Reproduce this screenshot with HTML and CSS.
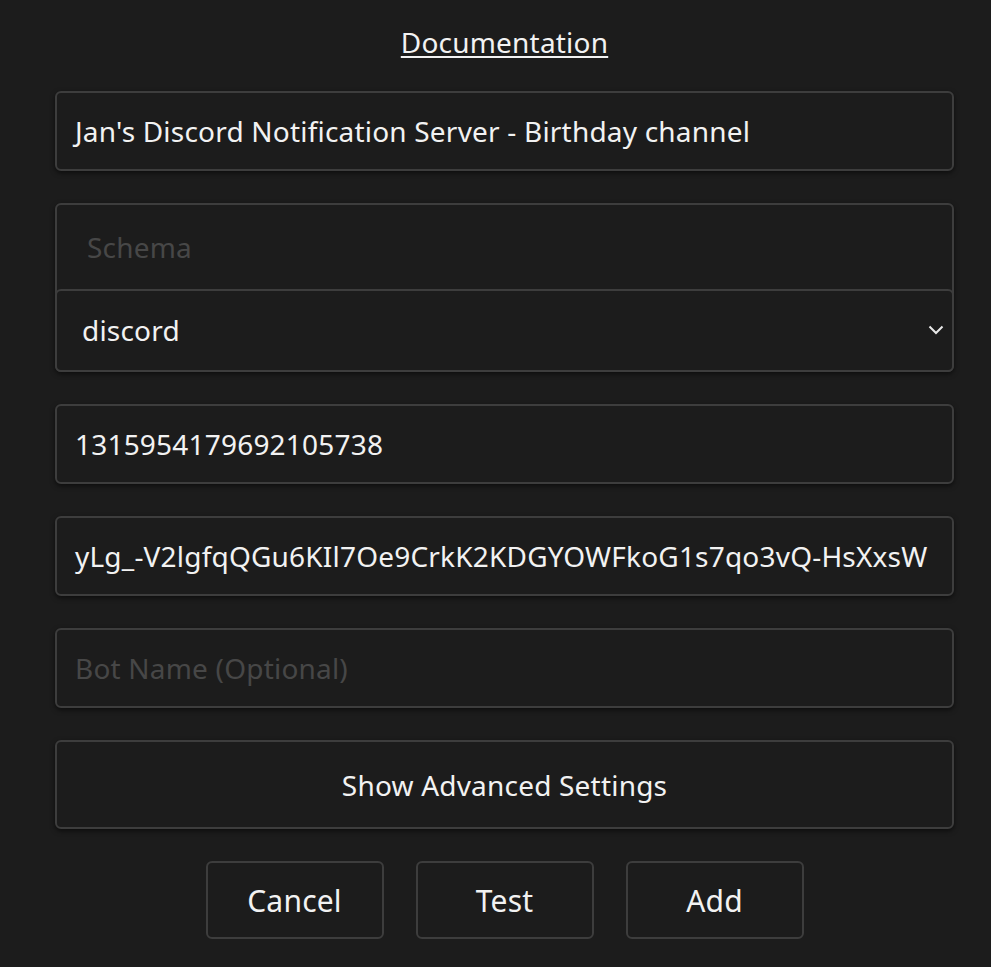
FILE: index.html
```html
<!DOCTYPE html>
<html>
<head>
<meta charset="utf-8">
<link rel="stylesheet" href="styles.css">
</head>
<body>
<div class="form">
  <div class="doc-row"><a class="doc" href="#">Documentation</a></div>
  <div class="field"><span class="value">Jan's Discord Notification Server - Birthday channel</span></div>
  <div class="schema">
    <span class="placeholder schema-label">Schema</span>
    <div class="select">
      <span class="value">discord</span>
      <svg class="chev" width="16" height="10" viewBox="0 0 16 10"><path d="M1.5 1.5 L8 8 L14.5 1.5" fill="none" stroke="#e8e8e8" stroke-width="2"/></svg>
    </div>
  </div>
  <div class="field"><span class="value">1315954179692105738</span></div>
  <div class="field"><span class="value">yLg_-V2lgfqQGu6KIl7Oe9CrkK2KDGYOWFkoG1s7qo3vQ-HsXxsW</span></div>
  <div class="field"><span class="placeholder">Bot Name (Optional)</span></div>
  <div class="field advanced"><span class="value">Show Advanced Settings</span></div>
  <div class="actions">
    <div class="btn">Cancel</div>
    <div class="btn">Test</div>
    <div class="btn">Add</div>
  </div>
</div>
</body>
</html>
```
FILE: styles.css
```css
html, body {
  margin: 0;
  padding: 0;
  background: #1c1c1c;
  height: 100%;
}
body {
  font-family: "Noto Sans", "Open Sans", sans-serif;
  color: #f2f2f2;
  letter-spacing: 0.2px;
}
.form {
  width: 899px;
  margin-left: 55px;
  padding-top: 24px;
  display: flex;
  flex-direction: column;
}
.doc-row {
  display: flex;
  justify-content: center;
  height: 67px;
}
.doc {
  color: #f2f2f2;
  font-size: 28px;
  line-height: 36px;
  text-decoration: underline;
  text-underline-offset: 3px;
  text-decoration-thickness: 2px;
}
.field {
  box-sizing: border-box;
  height: 80px;
  border: 2px solid #3d3d3d;
  border-radius: 6px;
  background: #1c1c1c;
  box-shadow: 0 2px 5px rgba(0,0,0,0.55);
  display: flex;
  align-items: center;
  padding-left: 18px;
  margin-bottom: 32px;
  font-size: 28px;
  white-space: nowrap;
  overflow: hidden;
}
.placeholder {
  color: #474747;
}
.schema {
  box-sizing: border-box;
  height: 169px;
  border: 2px solid #3d3d3d;
  border-radius: 6px;
  box-shadow: 0 2px 5px rgba(0,0,0,0.55);
  margin-bottom: 32px;
  display: flex;
  flex-direction: column;
}
.schema-label {
  font-size: 28px;
  height: 85px;
  display: flex;
  align-items: center;
  padding-left: 30px;
}
.select {
  box-sizing: border-box;
  height: 84px;
  margin: 0 -2px -2px -2px;
  border: 2px solid #3d3d3d;
  border-radius: 6px;
  background: #1c1c1c;
  display: flex;
  align-items: center;
  justify-content: space-between;
  padding: 0 8px 0 25px;
  font-size: 28px;
}
.advanced {
  justify-content: center;
  padding-left: 0;
  height: 89px;
}
.actions {
  display: flex;
  justify-content: center;
  gap: 32px;
}
.btn {
  box-sizing: border-box;
  width: 178px;
  height: 78px;
  border: 2px solid #3d3d3d;
  border-radius: 6px;
  display: flex;
  align-items: center;
  justify-content: center;
  font-size: 30px;
}
```
